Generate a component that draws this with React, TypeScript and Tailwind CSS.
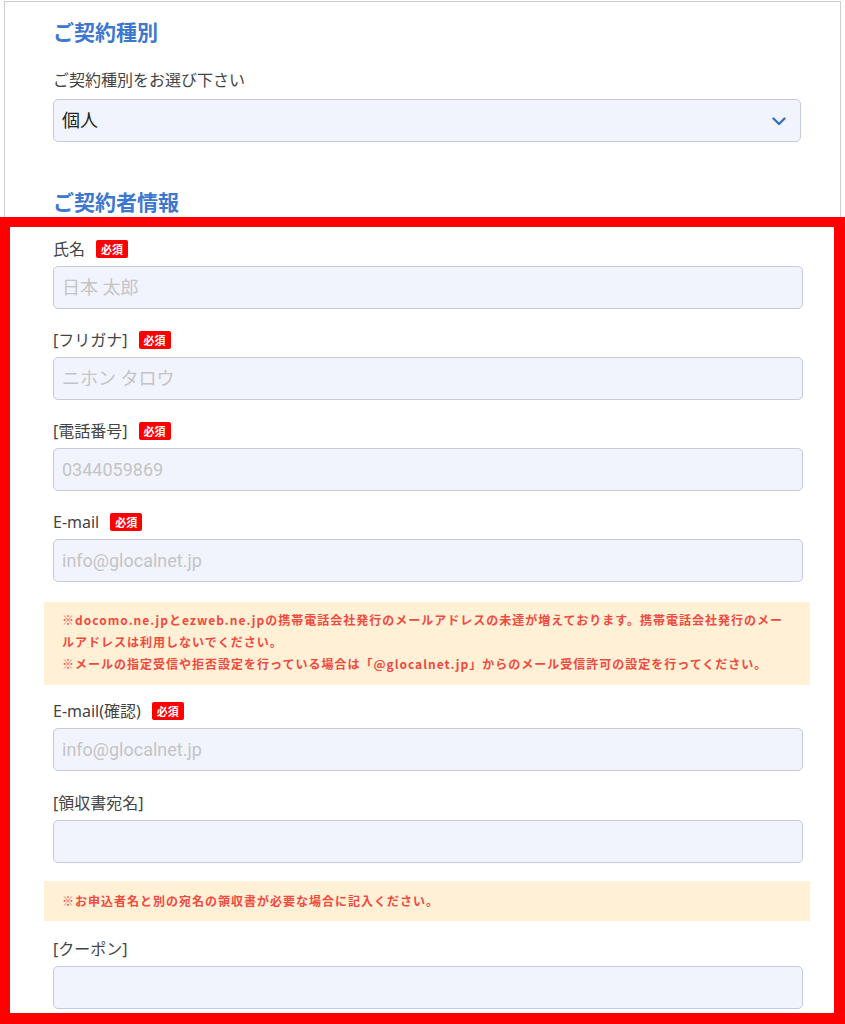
import type { ReactNode } from 'react'

const sans = 'font-["Noto_Sans","Noto_Sans_CJK_JP",sans-serif]'
const inputFont = 'font-["Roboto","Noto_Sans_CJK_JP",sans-serif]'

function Required() {
  return (
    <span className="ml-[11px] inline-flex h-[18px] items-center rounded-[2px] bg-[#ff0000] px-[5px] font-['Noto_Sans_CJK_JP',sans-serif] text-[11px] font-bold leading-none text-white">
      必須
    </span>
  )
}

type FieldProps = {
  label: string
  placeholder?: string
  required?: boolean
}

function Field({ label, placeholder, required }: FieldProps) {
  return (
    <div>
      <div className={`mb-[6px] flex h-[22px] items-center text-[16px] text-[#444] ${sans}`}>
        <span>{label}</span>
        {required && <Required />}
      </div>
      <input
        className={`block h-[43px] w-full rounded-[5px] border border-[#c4cadf] bg-[#f1f4fd] px-[8px] text-[18px] text-[#222] outline-none placeholder:text-[#c4c4c4] ${inputFont}`}
        placeholder={placeholder}
        type="text"
      />
    </div>
  )
}

function Notice({ children, className }: { children: ReactNode; className?: string }) {
  return (
    <div
      className={`-ml-[9px] -mr-[7px] bg-[#fff0d6] px-[18px] font-['Noto_Sans_CJK_JP',sans-serif] text-[12px] font-bold leading-[22px] tracking-[1px] whitespace-nowrap text-[#f04a3e] ${className ?? ''}`}
    >
      {children}
    </div>
  )
}

export default function App() {
  return (
    <div className="relative h-[1024px] w-[845px] overflow-hidden bg-white">
      <div className="mt-px ml-[4px] w-[837px] border-x border-t border-[#cdcdcd] pt-[14px] pl-[48px]">
        <div className="w-[750px]">
          <h2 className="h-[30px] font-['Noto_Sans_CJK_JP',sans-serif] text-[21px] leading-[30px] font-bold text-[#3c78cf]">
            ご契約種別
          </h2>
          <p className={`mt-[22px] h-[24px] text-[16px] leading-[24px] text-[#444] ${sans}`}>ご契約種別をお選び下さい</p>
          <div className="mt-[7px] flex h-[43px] w-[748px] items-center justify-between rounded-[5px] border border-[#c4cadf] bg-[#f1f4fd] pr-[14px] pl-[8px]">
            <span className={`text-[18px] text-[#222] ${inputFont}`}>個人</span>
            <svg width="14" height="10" viewBox="0 0 14 10" fill="none">
              <path d="M1.5 2.5 7 8l5.5-5.5" stroke="#3a6fb8" strokeWidth="2.4" strokeLinecap="round" strokeLinejoin="round" />
            </svg>
          </div>

          <h2 className="mt-[44px] h-[30px] font-['Noto_Sans_CJK_JP',sans-serif] text-[21px] leading-[30px] font-bold text-[#3c78cf]">
            ご契約者情報
          </h2>

          <div className="mt-[22px] flex flex-col gap-[20px]">
            <Field label="氏名" placeholder="日本 太郎" required />
            <Field label="[フリガナ]" placeholder="ニホン タロウ" required />
            <Field label="[電話番号]" placeholder="0344059869" required />
            <Field label="E-mail" placeholder="info@glocalnet.jp" required />
          </div>

          <Notice className="mt-[20px] pt-[7px] pb-[10px]">
            ※docomo.ne.jpとezweb.ne.jpの携帯電話会社発行のメールアドレスの未達が増えております。携帯電話会社発行のメー
            <br />
            ルアドレスは利用しないでください。
            <br />
            ※メールの指定受信や拒否設定を行っている場合は「@glocalnet.jp」からのメール受信許可の設定を行ってください。
          </Notice>

          <div className="mt-[15px] flex flex-col gap-[21px]">
            <Field label="E-mail(確認)" placeholder="info@glocalnet.jp" required />
            <Field label="[領収書宛名]" />
          </div>

          <Notice className="mt-[18px] py-[9px]">※お申込者名と別の宛名の領収書が必要な場合に記入ください。</Notice>

          <div className="mt-[17px]">
            <Field label="[クーポン]" />
          </div>
        </div>
      </div>

      <div className="pointer-events-none absolute top-[217px] right-0 bottom-0 left-0 border-[10px] border-r-[11px] border-b-[11px] border-[#ff0000]" />
    </div>
  )
}
